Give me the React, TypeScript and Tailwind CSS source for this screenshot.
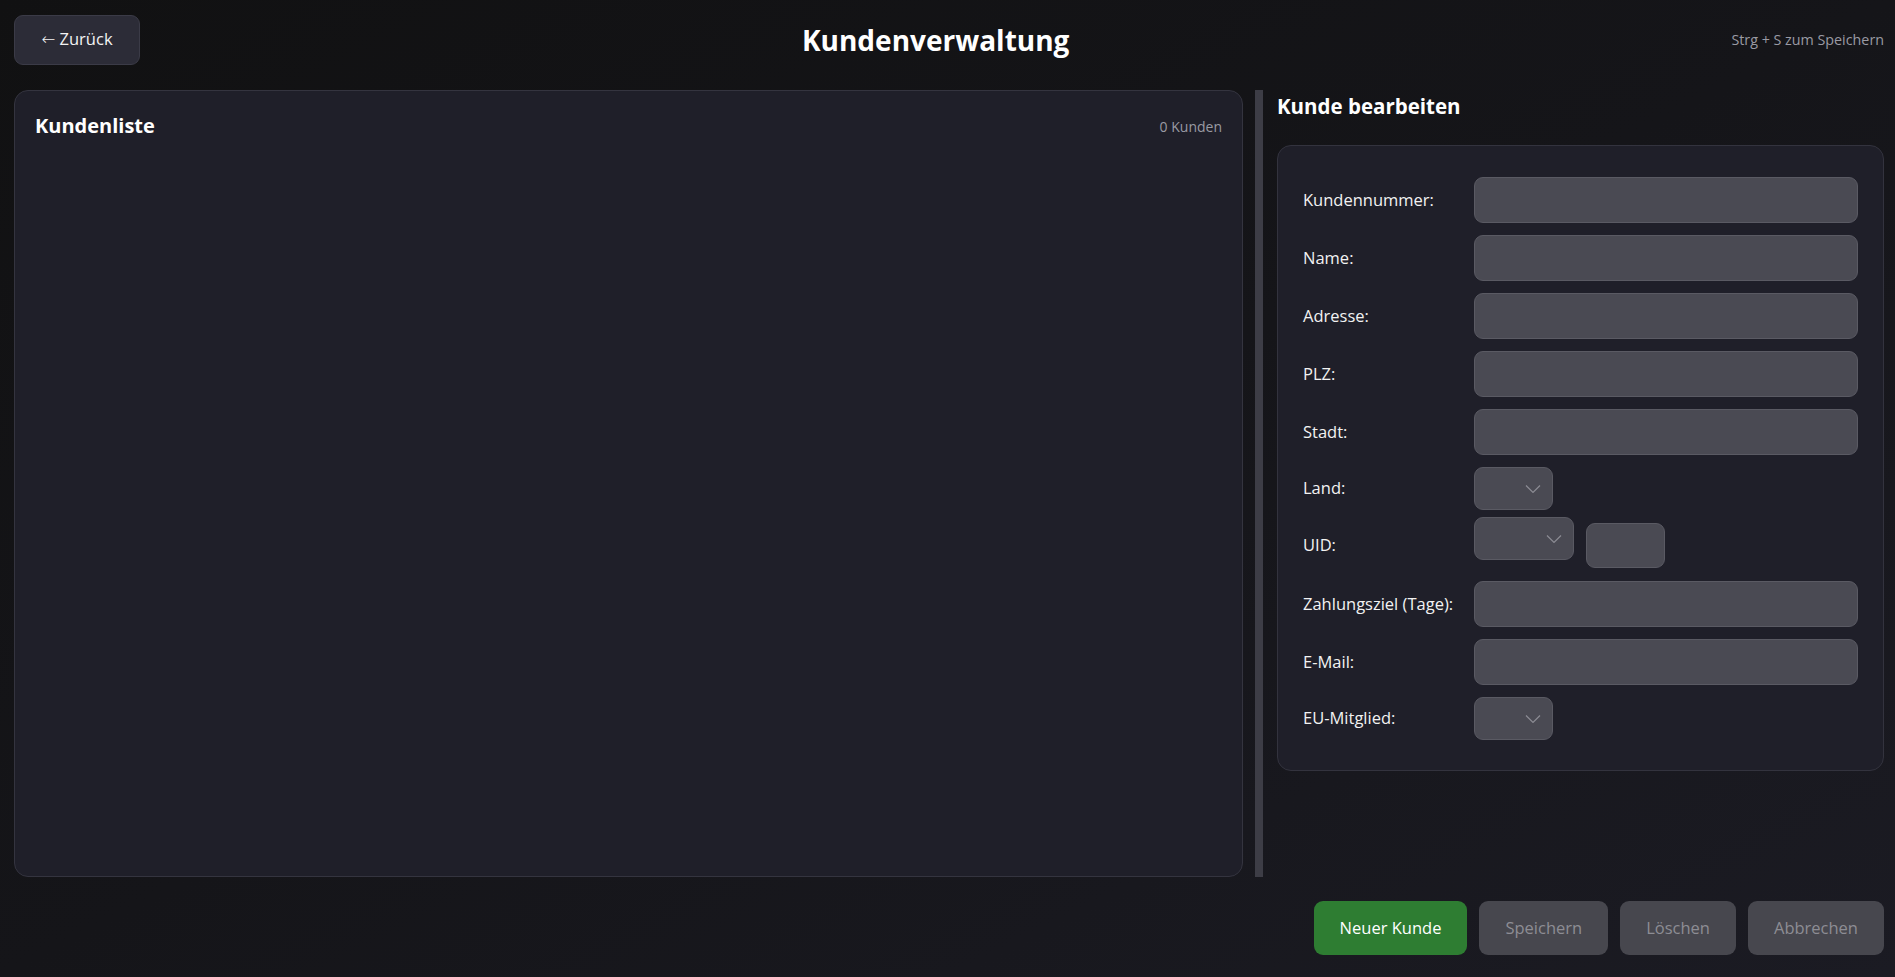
import React from 'react';

const font = { fontFamily: '"Open Sans", "Noto Sans", Arial, sans-serif' };

const Chevron: React.FC = () => (
  <svg width="16" height="9" viewBox="0 0 16 9" fill="none" className="absolute right-[11px] top-1/2 -translate-y-1/2">
    <path d="M1 1l7 7 7-7" stroke="#8c8c94" strokeWidth="1.2" />
  </svg>
);

const Select: React.FC<{ width: string; extra?: string }> = ({ width, extra = '' }) => (
  <div className={`relative h-[43px] ${width} ${extra} rounded-[9px] border border-[#5a5a63] bg-[#4a4a53]`}>
    <Chevron />
  </div>
);

const Input: React.FC<{ extra?: string }> = ({ extra = 'w-full h-[46px]' }) => (
  <div className={`${extra} rounded-[9px] border border-[#5a5a63] bg-[#4a4a53]`} />
);

const Row: React.FC<{ label: string; children: React.ReactNode; h?: string }> = ({ label, children, h = 'h-[46px]' }) => (
  <div className={`flex items-center ${h}`}>
    <label className="w-[171px] shrink-0 text-[16.5px] text-[#f2f2f2]">{label}</label>
    <div className="flex-1 flex items-start h-full">{children}</div>
  </div>
);

export default function App() {
  return (
    <div
      style={font}
      className="h-screen w-full flex flex-col pl-[14px] pr-[11px] pt-[15px] pb-[22px] bg-linear-to-br from-[#111112] via-[#151519] to-[#1b1b23] text-white overflow-hidden"
    >
      {/* header */}
      <div className="flex justify-between items-center h-[50px] shrink-0">
        <button className="h-[50px] w-[126px] rounded-[9px] border border-[#3b3b47] bg-[#2c2c37] text-[16.5px] text-[#f3f3f3]">
          <span className="font-['DejaVu_Sans'] font-light">←</span> Zurück
        </button>
        <h1 className="text-[28px] font-bold leading-none text-white">Kundenverwaltung</h1>
        <span className="text-[14.3px] text-[#9a9aa3]">Strg + S zum Speichern</span>
      </div>

      {/* main */}
      <div className="mt-[25px] flex flex-1 min-h-0">
        <section className="flex-1 rounded-[14px] border border-[#34343f] bg-[#1f1f29]">
          <div className="flex justify-between items-center px-[20px] pt-[20px]">
            <h2 className="text-[20px] font-bold leading-[30px] text-white">Kundenliste</h2>
            <span className="text-[14px] text-[#9a9aa3]">0 Kunden</span>
          </div>
        </section>

        <div className="ml-[12px] mr-[14px] w-[8px] bg-[#3d3d46]" />

        <aside className="w-[607px] shrink-0 flex flex-col">
          <h2 className="h-[32px] text-[20.5px] font-bold leading-[32px] text-white">Kunde bearbeiten</h2>
          <div className="mt-[23px] rounded-[14px] border border-[#33333e] bg-[#1f1f29] px-[25px] pt-[31px] pb-[30px] flex flex-col gap-[12px]">
            <Row label="Kundennummer:"><Input /></Row>
            <Row label="Name:"><Input /></Row>
            <Row label="Adresse:"><Input /></Row>
            <Row label="PLZ:"><Input /></Row>
            <Row label="Stadt:"><Input /></Row>
            <Row label="Land:" h="h-[43px]"><Select width="w-[79px]" /></Row>
            <Row label="UID:" h="h-[47px]">
              <Select width="w-[100px]" extra="-mt-[5px]" />
              <Input extra="ml-[12px] mt-[1px] w-[79px] h-[45px]" />
            </Row>
            <Row label="Zahlungsziel (Tage):"><Input /></Row>
            <Row label="E-Mail:"><Input /></Row>
            <Row label="EU-Mitglied:" h="h-[43px]"><Select width="w-[79px]" /></Row>
          </div>
        </aside>
      </div>

      {/* footer */}
      <div className="mt-[24px] h-[54px] shrink-0 flex justify-end gap-3">
        <button className="px-[26px] rounded-[9px] bg-[#2e7d32] text-[16.5px] text-white">Neuer Kunde</button>
        <button className="px-[26px] rounded-[9px] bg-[#47474e] text-[16.5px] text-[#8d8d94]">Speichern</button>
        <button className="px-[26px] rounded-[9px] bg-[#47474e] text-[16.5px] text-[#8d8d94]">Löschen</button>
        <button className="px-[26px] rounded-[9px] bg-[#47474e] text-[16.5px] text-[#8d8d94]">Abbrechen</button>
      </div>
    </div>
  );
}
